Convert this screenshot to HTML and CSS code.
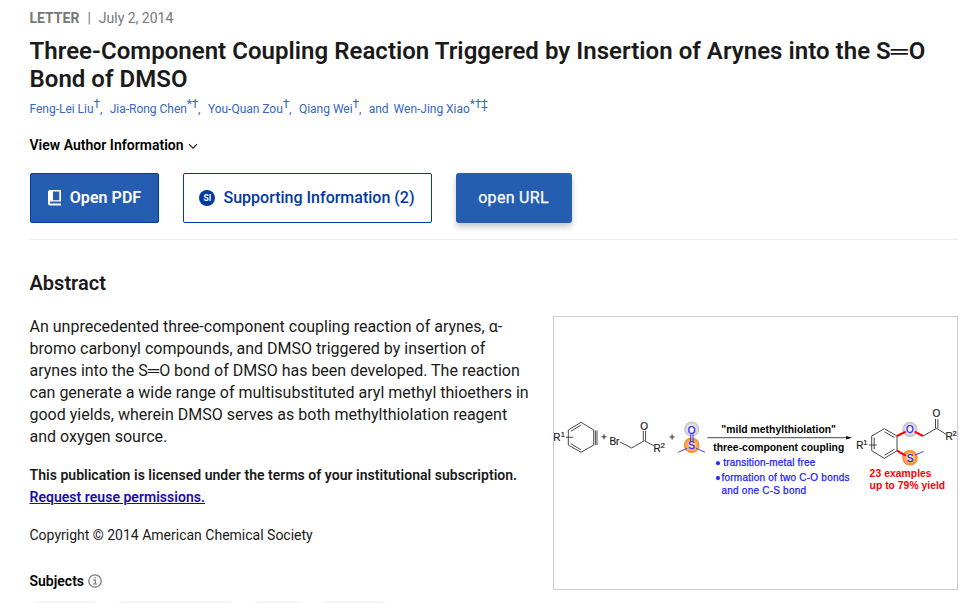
FILE: index.html
```
<!DOCTYPE html>
<html lang="en">
<head>
    <meta charset="UTF-8">
    <meta name="viewport" content="width=device-width, initial-scale=1.0">
    <title>Three-Component Coupling Reaction Triggered by Insertion of Arynes</title>
    <link rel="stylesheet" href="styles.css">
</head>
<body>
    <main class="article">
        <header class="article-header">
            <div class="article-meta"><strong>LETTER</strong><span class="divider">|</span>July 2, 2014</div>
            <h1>Three-Component Coupling Reaction Triggered by Insertion of Arynes into the S<span class="bond">═</span>O Bond of DMSO</h1>
            <div class="authors">
                <a>Feng-Lei Liu<sup>†</sup>,</a>
                <a>Jia-Rong Chen<sup>*†</sup>,</a>
                <a>You-Quan Zou<sup>†</sup>,</a>
                <a>Qiang Wei<sup>†</sup>,</a>
                <span class="and">and</span>
                <a>Wen-Jing Xiao<sup>*†‡</sup></a>
            </div>
            <div class="author-info">
                View Author Information
                <svg width="10" height="7" viewBox="0 0 10 7"><path d="M1 1.2l4 4 4-4" fill="none" stroke="#222" stroke-width="1.2"/></svg>
            </div>
            <div class="actions">
                <a class="btn btn-pdf">
                    <svg width="13" height="16" viewBox="0 0 13 16">
                        <path fill="#fff" fill-rule="evenodd" d="M2 0h11v11.6H2.8a.9.9 0 0 0 0 1.9H13V15.4H2A2 2 0 0 1 0 13.4V2A2 2 0 0 1 2 0zM5 1.5v8.8h6.3V1.5z"/>
                    </svg>
                    Open PDF
                </a>
                <a class="btn btn-si"><span class="si-icon">SI</span>Supporting Information (2)</a>
                <a class="btn btn-url">open URL</a>
            </div>
        </header>

        <h2>Abstract</h2>
        <div class="abstract">
            <div class="abstract-text">
                <p class="summary">An unprecedented three-component coupling reaction of arynes, α-bromo carbonyl compounds, and DMSO triggered by insertion of arynes into the S<span class="bond">═</span>O bond of DMSO has been developed. The reaction can generate a wide range of multisubstituted aryl methyl thioethers in good yields, wherein DMSO serves as both methylthiolation reagent and oxygen source.</p>
                <p class="license">This publication is licensed under the terms of your institutional subscription. <a>Request reuse permissions.</a></p>
                <p class="copyright">Copyright © 2014 American Chemical Society</p>
                <div class="subjects">
                    Subjects
                    <svg width="14" height="14" viewBox="0 0 14 14" fill="none" stroke="#777">
                        <circle cx="7" cy="7" r="6.2" stroke-width="1.3"/>
                        <path d="M5.3 6.2H7.3V10M5 10h4.2M6.3 3.9h1.4" stroke-width="1.2"/>
                    </svg>
                </div>
            </div>

            <figure class="scheme">
                <svg width="403" height="272" viewBox="0 0 403 272">
                    <defs>
                        <radialGradient id="oxygen">
                            <stop offset="0" stop-color="#fff"/>
                            <stop offset=".55" stop-color="#e8e8ea"/>
                            <stop offset="1" stop-color="#bebec0"/>
                        </radialGradient>
                        <radialGradient id="sulfur">
                            <stop offset="0" stop-color="#fff3df"/>
                            <stop offset=".5" stop-color="#ffbd72"/>
                            <stop offset="1" stop-color="#f9821a"/>
                        </radialGradient>
                    </defs>

                    <!-- aryne -->
                    <path class="line" d="M27 105.3L39.7 113V128L27 135.3 14.3 128V113zM41.4 113.5v14.5M43 113.5v14.5M16.8 114.3l10-6M16.8 126.7l10 6M12 120.3h7.3"/>
                    <text class="atom" x="-.7" y="123.7">R</text>
                    <text class="index" x="6.7" y="120">1</text>
                    <path class="line plus" d="M47.5 119.8h5M50 117.3v5"/>

                    <!-- bromo ketone -->
                    <text class="atom" x="55.4" y="128">Br</text>
                    <path class="line" d="M66 125l11.7 6 12.6-7.3 10 5.3M89.3 123.7v-10M91.6 123.7v-10"/>
                    <text class="atom" x="86.3" y="113">O</text>
                    <text class="atom" x="99.6" y="134.7">R</text>
                    <text class="index" x="106.8" y="131">2</text>
                    <path class="line plus" d="M115.6 120h5M118.1 117.5v5"/>

                    <!-- DMSO -->
                    <circle cx="137.7" cy="112" r="7.6" fill="url(#oxygen)"/>
                    <circle cx="137.7" cy="128.3" r="7.8" fill="url(#sulfur)"/>
                    <path class="line methyl" d="M136.6 117.5v6.7M139 117.5v6.7M124.3 135.3l8.7-4M142.3 131.3l8.7 4"/>
                    <text class="atom blue" x="133.8" y="116.7">O</text>
                    <text class="atom blue" x="134.3" y="132.2">S</text>

                    <!-- conditions -->
                    <path class="line" d="M153.3 120.7H295"/>
                    <path d="M298 120.7l-6-1.8v3.6z"/>
                    <g class="bold">
                        <text x="167.3" y="116" textLength="114.7">"mild methylthiolation"</text>
                        <text x="159.2" y="133.8" textLength="131">three-component coupling</text>
                    </g>
                    <g class="notes">
                        <circle cx="164" cy="146.2" r="1.9"/>
                        <text x="169.3" y="149.4" textLength="92">transition-metal free</text>
                        <circle cx="164" cy="161" r="1.9"/>
                        <text x="167.5" y="164" textLength="128">formation of two C-O bonds</text>
                        <text x="167.5" y="176.5" textLength="84.5">and one C-S bond</text>
                    </g>

                    <!-- product -->
                    <circle cx="356" cy="112.3" r="7.6" fill="url(#oxygen)"/>
                    <circle cx="356" cy="140.7" r="7.8" fill="url(#sulfur)"/>
                    <path class="line" d="M330.3 111.7L343 119v14.7l-12.7 7.6-12.6-7.6V119zM330.5 114.8l10 5.8M340.5 132.2l-10 6M320.2 120.6v11.7M315 128h7.7M369 119l13.7-7.7 9.3 6M381.5 111.3V102M383.9 111.3V102"/>
                    <path class="new-bond" d="M343 119l8.7-4.3M360.7 114.7l8.3 4.3M343 133.7l8.7 5"/>
                    <path class="line methyl" d="M361 138l8.7-3.7"/>
                    <text class="atom blue" x="352.1" y="115.8">O</text>
                    <text class="atom blue" x="352.7" y="144.6">S</text>
                    <text class="atom" x="302.3" y="131.7">R</text>
                    <text class="index" x="309.3" y="128">1</text>
                    <text class="atom" x="378.5" y="100.4">O</text>
                    <text class="atom" x="391.4" y="122.5">R</text>
                    <text class="index" x="398.5" y="119">2</text>
                    <g class="bold result">
                        <text x="315.6" y="159.8" textLength="62">23 examples</text>
                        <text x="315.6" y="172.3" textLength="75.5">up to 79% yield</text>
                    </g>
                </svg>
            </figure>
        </div>
        <div class="tags">
            <span class="tag tag-1"></span>
            <span class="tag tag-2"></span>
            <span class="tag tag-3"></span>
            <span class="tag tag-4"></span>
        </div>
    </main>
</body>
</html>
```
FILE: styles.css
```
:root {
    --blue: #255eb1;
    --dark-blue: #0039a6;
    --text-color: #1a1a1a;
}

* {
    margin: 0;
    padding: 0;
    box-sizing: border-box;
}

body {
    background: #fff;
    color: var(--text-color);
    font-family: Roboto, "Liberation Sans", sans-serif;
    height: 603px;
    overflow: hidden;
}

.article {
    width: 928.5px;
    margin-left: 29.5px;
}

.article-header {
    height: 240px;
    padding-top: 8px;
    border-bottom: 1px solid #ececec;
}

.article-meta {
    font-size: 14px;
    line-height: 20px;
    color: #777;
}

.article-meta strong {
    font-weight: 700;
}

.divider {
    margin: 0 8px;
}

h1 {
    margin-top: 9px;
    font-size: 24px;
    line-height: 28px;
    font-weight: 600;
    letter-spacing: 0.035px;
}

.bond {
    font-family: "Liberation Sans", sans-serif;
    line-height: 1;
}

h1 .bond {
    letter-spacing: 1px;
}

.authors {
    display: flex;
    height: 20px;
    margin-top: 6px;
    font-size: 12px;
    line-height: 20px;
    letter-spacing: -0.02px;
    color: #3567c4;
    white-space: nowrap;
}

.authors a {
    margin-right: 7.5px;
}

.authors .and {
    margin-right: 5px;
}

.authors sup {
    font-size: 12px;
    line-height: 0;
    vertical-align: 5px;
    letter-spacing: -0.3px;
}

.author-info {
    display: flex;
    align-items: center;
    gap: 4px;
    height: 20px;
    margin-top: 16px;
    font-size: 14px;
    font-weight: 600;
    letter-spacing: 0.02px;
    color: #000;
}

.author-info svg {
    margin-top: 3px;
}

.actions {
    display: flex;
    gap: 24px;
    margin: 18px 0 0 0.5px;
}

.btn {
    display: flex;
    align-items: center;
    justify-content: center;
    height: 50px;
    padding-bottom: 1px;
    border: 1px solid var(--dark-blue);
    border-radius: 2px;
    font-size: 16px;
    font-weight: 500;
    color: #fff;
    background: var(--blue);
}

.btn-pdf {
    width: 129px;
    gap: 9px;
    font-weight: 600;
    letter-spacing: 0.05px;
}

.btn-si {
    width: 249px;
    padding-right: 1px;
    gap: 8px;
    color: var(--dark-blue);
    background: #fff;
}

.si-icon {
    width: 16px;
    height: 16px;
    border-radius: 50%;
    background: var(--dark-blue);
    color: #fff;
    font-size: 8.5px;
    line-height: 16px;
    font-weight: 700;
    text-align: center;
}

.btn-url {
    width: 116px;
    padding: 0 1px 2px 0;
    border: 0;
    border-radius: 3px;
    letter-spacing: 0.3px;
    font-weight: 400;
    box-shadow: 0 4px 6px rgba(0, 0, 0, 0.22);
    -webkit-text-stroke: 0.25px #fff;
}

h2 {
    margin-top: 31px;
    font-size: 20px;
    line-height: 24px;
    font-weight: 600;
}

.abstract {
    display: flex;
    justify-content: space-between;
    height: 274px;
    margin-top: 21px;
}

.abstract-text {
    width: 502px;
}

.summary {
    font-size: 16px;
    line-height: 22px;
}

.license {
    margin-top: 16px;
    font-size: 14px;
    line-height: 22px;
    font-weight: 600;
    letter-spacing: 0.03px;
}

.license a {
    display: block;
    color: #1a0dab;
    text-decoration: underline;
}

.copyright {
    margin-top: 16px;
    font-size: 14px;
    line-height: 22px;
}

.subjects {
    display: flex;
    align-items: center;
    gap: 4px;
    margin-top: 25px;
    font-size: 14px;
    line-height: 20px;
    font-weight: 600;
    color: #000;
}

.scheme {
    width: 405px;
    height: 274px;
    border: 1px solid #ccc;
}

.scheme svg {
    display: block;
    font-family: "Liberation Sans", sans-serif;
}

.line {
    fill: none;
    stroke: #333;
    stroke-width: 0.9;
}

.plus {
    stroke-width: 1.1;
}

.methyl {
    stroke: #2929ff;
}

.new-bond {
    fill: none;
    stroke: #f00;
    stroke-width: 2;
}

.atom {
    font-size: 10px;
    fill: #222;
    stroke: #222;
    stroke-width: 0.2;
}

.index {
    font-size: 7.5px;
    fill: #222;
    stroke: #222;
    stroke-width: 0.2;
}

.blue,
.notes {
    fill: #1c1cff;
    stroke: #1c1cff;
    stroke-width: 0.25;
}

.notes {
    font-size: 10px;
}

.bold {
    font-size: 10.3px;
    font-weight: 700;
}

.result {
    fill: #f00;
}

.tags {
    display: flex;
    gap: 6px;
    margin: 11px 0 0 -1.5px;
}

.tag {
    height: 28px;
    border-radius: 14px;
    background: #f4f4f4;
}

.tag-1 { width: 76px; }
.tag-2 { width: 130px; }
.tag-3 { width: 62px; }
.tag-4 { width: 80px; }
```
